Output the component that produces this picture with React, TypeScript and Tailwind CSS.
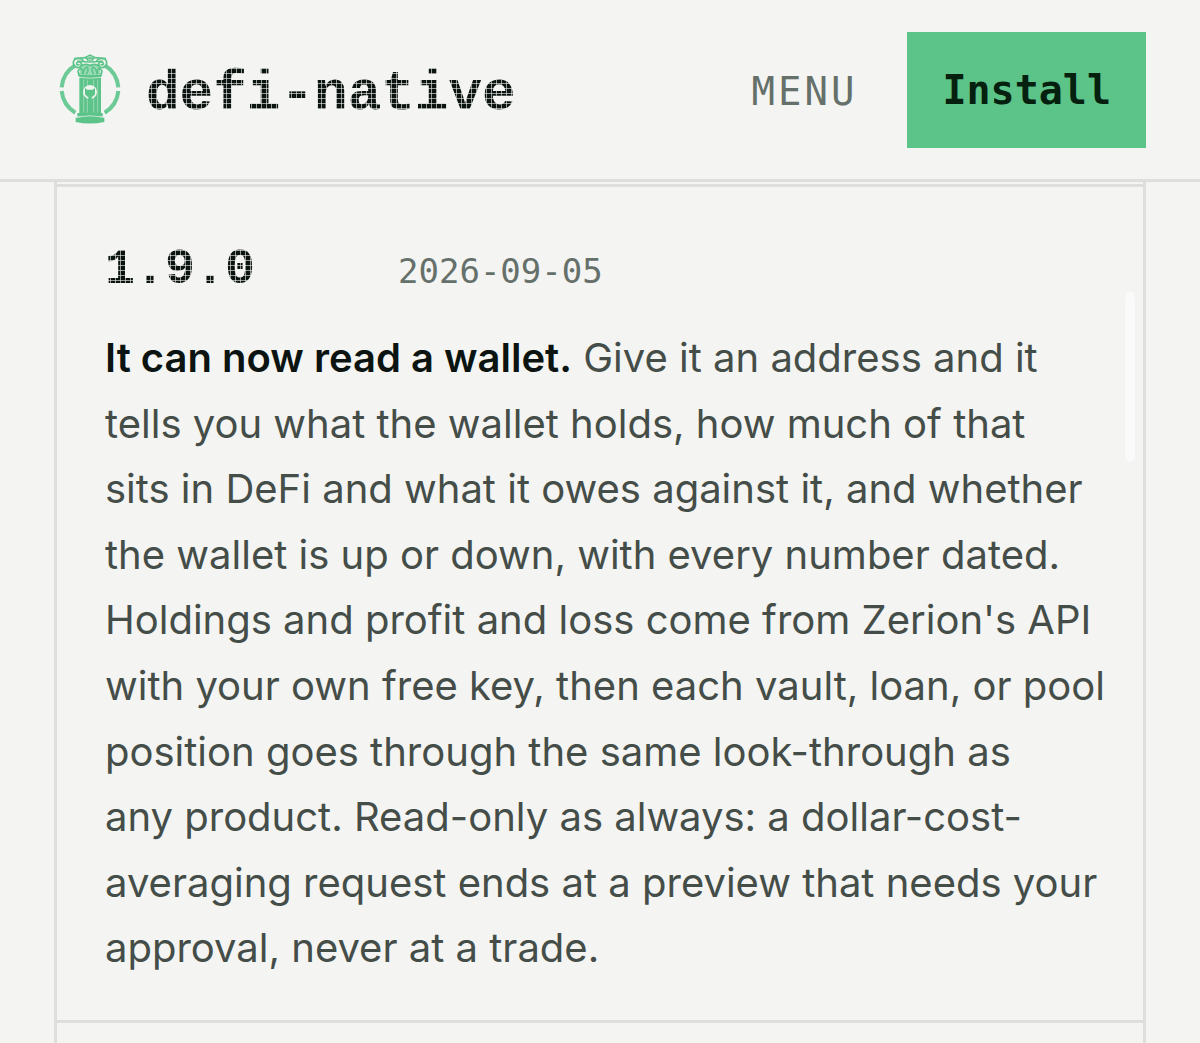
const lines = [
  "tells you what the wallet holds, how much of that",
  "sits in DeFi and what it owes against it, and whether",
  "the wallet is up or down, with every number dated.",
  "Holdings and profit and loss come from Zerion's API",
  "with your own free key, then each vault, loan, or pool",
  "position goes through the same look-through as",
  "any product. Read-only as always: a dollar-cost-",
  "averaging request ends at a preview that needs your",
  "approval, never at a trade.",
];

const dotted =
  "bg-clip-text text-transparent bg-[#0b1410] bg-[image:linear-gradient(to_right,#f4f4f299_1px,transparent_1px),linear-gradient(to_bottom,#f4f4f299_1px,transparent_1px)] bg-[size:5px_5px]";

function PillarLogo() {
  return (
    <svg viewBox="0 0 240 270" className="h-[90px] w-20 shrink-0" fill="none" aria-hidden="true">
      <g stroke="#6bca95" strokeWidth="12">
        <path d="M35 127 A86 86 0 0 1 76 61" />
        <path d="M164 61 A86 86 0 0 1 205 127" />
        <path d="M35 138 A86 86 0 0 0 76 203" />
        <path d="M164 203 A86 86 0 0 0 205 138" />
      </g>
      <path fill="#5cc489" d="M88 94H153V205H88Z M82 204H158V215H82Z M77 218Q120 211 163 218V231Q120 240 77 231Z M84 84H156V94H84Z" />
      <path stroke="#f4f4f2" strokeOpacity=".6" strokeWidth="2" d="M101 104V203M112 104V203M131 104V203M143 104V203" />
      <path stroke="#f4f4f2" strokeWidth="2" d="M84 97Q120 102 156 97M80 216Q120 209 160 216" />
      <circle cx="120" cy="141" r="21" fill="#eff4ef" />
      <path fill="#5cc489" d="M105 129L112 134H128L135 129V148L128 155H112L105 148Z M115 153H125V165H115Z" />
      <path fill="#9bdab7" d="M89 58H151V90H89Z" />
      <g stroke="#5cc489" strokeWidth="5">
        <path d="M72 41Q120 35 168 41M82 48Q120 54 158 48" />
        <path d="M101 50C96 38 72 36 70 52C69 68 90 74 94 60C96 51 82 47 80 55C79 60 86 62 87 57" />
        <path d="M139 50C144 38 168 36 170 52C171 68 150 74 146 60C144 51 158 47 160 55C161 60 154 62 153 57" />
        <path d="M94 63Q105 54 120 62Q135 54 146 63" />
        <path d="M86 86Q80 75 93 70Q101 76 96 87M99 88Q102 69 111 66Q118 75 109 88M131 88Q122 75 129 66Q138 69 141 88M144 87Q139 76 147 70Q160 75 154 86" />
      </g>
      <path fill="#5cc489" d="M105 35L120 28L135 35L129 47H111Z" />
      <path stroke="#f4f4f2" strokeWidth="2" d="M112 38Q120 31 128 38M115 43H125" />
    </svg>
  );
}

export default function App() {
  return (
    <div className="min-h-screen overflow-x-hidden bg-[#f4f4f2] font-['Inter',sans-serif] text-[#444d48]">
      <header className="flex items-center justify-between border-b-3 border-[#dcdfdc] px-[54px] pt-8 pb-[31px]">
        <a href="#home" className="-ml-1 flex items-center gap-4">
          <PillarLogo />
          <span className={`pt-2 font-['Liberation_Mono',monospace] text-[56px] leading-none font-bold ${dotted}`}>defi-native</span>
        </a>
        <div className="flex items-center gap-[50px]">
          <button className="pt-1 font-['DejaVu_Sans_Mono',monospace] text-[39px] tracking-[3px] text-[#65706a]">MENU</button>
          <button className="h-[116px] bg-[#5cc489] px-[35px] font-['DejaVu_Sans_Mono',monospace] text-[40px] font-bold text-[#06200f]">Install</button>
        </div>
      </header>
      <main className="relative mx-[54px] border-x-3 border-[#dcdfdc] pt-[2px]">
        <article className="border-y-3 border-[#dcdfdc] px-12 pt-[53px] pb-[39px]">
          <div className="flex items-baseline">
            <h2 className={`w-[293px] font-['Liberation_Mono',monospace] text-[50px] leading-[60px] font-bold ${dotted}`}>1.9.0</h2>
            <time className="font-['DejaVu_Sans_Mono',monospace] text-[34px] leading-[60px] text-[#65706a]">2026-09-05</time>
          </div>
          <p className="mt-6 text-[40px] leading-[1.64] whitespace-nowrap">
            <strong className="font-semibold text-[#0b1410]">It can now read a wallet.</strong> Give it an address and it
            {lines.map((line) => (
              <span key={line}>
                <br />
                {line}
              </span>
            ))}
          </p>
        </article>
        <div className="h-5" />
        <div className="absolute top-[110px] right-2 h-[170px] w-[10px] rounded-full bg-[#fafafa]" />
      </main>
    </div>
  );
}
